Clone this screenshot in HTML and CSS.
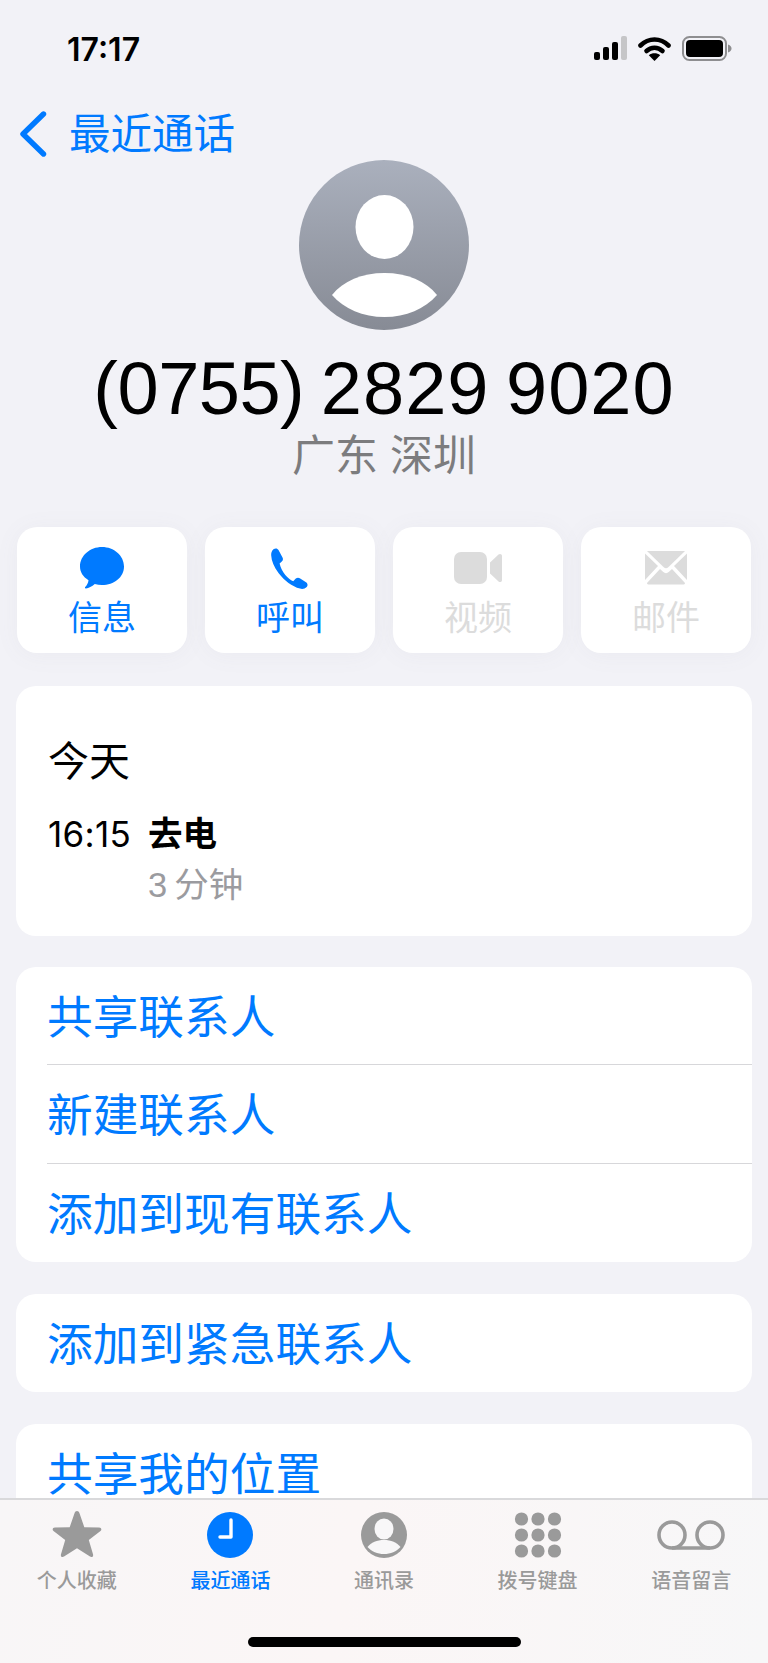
FILE: index.html
```html
<!DOCTYPE html>
<html lang="zh-CN">
<head>
    <meta charset="utf-8">
    <title>最近通话</title>
    <link rel="stylesheet" href="styles.css">
</head>
<body>
    <div class="content">
        <div class="status-bar">
            <span class="time">17:17</span>
            <div class="status-icons">
                <svg width="33" height="24" viewBox="0 0 33 24">
                    <rect x="0" y="16" width="6" height="8" rx="2" fill="#000"/>
                    <rect x="9" y="11" width="6" height="13" rx="2" fill="#000"/>
                    <rect x="18" y="6" width="6" height="18" rx="2" fill="#000"/>
                    <rect x="27" y="0" width="6" height="24" rx="2" fill="#c6c6c8"/>
                </svg>
                <svg width="33" height="25" viewBox="0 0 33 25">
                    <path d="M2.5 9.5C10.5 1.5 22.5 1.5 30.5 9.5" fill="none" stroke="#000" stroke-width="4.6" stroke-linecap="round"/>
                    <path d="M8.5 15C13 10.7 20 10.7 24.5 15" fill="none" stroke="#000" stroke-width="4.6" stroke-linecap="round"/>
                    <path d="M16.5 25L10.8 19.2C14 16.6 19 16.6 22.2 19.2Z" fill="#000"/>
                </svg>
                <svg width="50" height="25" viewBox="0 0 50 25">
                    <rect x="1" y="1" width="43" height="23" rx="6.5" fill="none" stroke="#8e8e90" stroke-width="2"/>
                    <rect x="4" y="4" width="37" height="17" rx="4" fill="#000"/>
                    <path d="M46 8.5C48.5 9.3 49.5 10.8 49.5 12.5S48.5 15.7 46 16.5Z" fill="#8e8e90"/>
                </svg>
            </div>
        </div>

        <div class="nav">
            <svg class="back-icon" width="28" height="46" viewBox="0 0 28 46">
                <path d="M24.5 3L4 23L24.5 43" fill="none" stroke="#007aff" stroke-width="5.4" stroke-linecap="round" stroke-linejoin="round"/>
            </svg>
            <span class="nav-title">最近通话</span>
        </div>

        <div class="header">
            <svg class="avatar" width="170" height="170" viewBox="0 0 170 170">
                <defs>
                    <linearGradient id="avatarBg" x1="0" y1="0" x2="0" y2="1">
                        <stop offset="0" stop-color="#aab0bd"/>
                        <stop offset="1" stop-color="#878b95"/>
                    </linearGradient>
                </defs>
                <circle cx="85" cy="85" r="85" fill="url(#avatarBg)"/>
                <ellipse cx="85.5" cy="67" rx="29" ry="32" fill="#fff"/>
                <path d="M33 135C44 121 63 113 85.5 113S127 121 138 135C126 149 107 157 85.5 157S45 149 33 135Z" fill="#fff"/>
            </svg>
            <h1 class="number"><span class="area-code">(0755)</span> 2829 9020</h1>
            <p class="place">广东 深圳</p>
        </div>

        <div class="actions">
            <div class="action">
                <svg width="46" height="42" viewBox="0 0 46 42">
                    <path d="M23 0C35 0 45 8.600 45 19.500S35 38 23 38C20.500 38 18 37.600 15.800 37C13 39.500 9.500 41 7 41.500C6 41.600 5.600 40.800 6.200 40.100C7.800 38.300 9.300 35.700 9.500 33.200C4 29.800 1 25 1 19.500C1 8.600 11 0 23 0Z" fill="#007aff"/>
                </svg>
                <span>信息</span>
            </div>
            <div class="action">
                <svg width="46" height="42" viewBox="0 0 46 42">
                    <path d="M6.500 2.300C8 1 10.500 1 11.500 3L15.500 10.500C16.300 12 16 13.400 14.800 14.500L12.600 16.500C13.500 20.500 15.500 24.500 18.300 28C20.800 31 23.500 33 26.200 34.200L28.800 31.600C30 30.500 31.500 30.300 32.800 31.200L39 35.300C40.800 36.500 41 38.500 39.700 40C38 41.700 35.500 42.300 33 41.600C25 39.500 17.500 33.800 11.500 26C7 20 4.500 14 4.200 8.500C4 6 4.800 3.800 6.500 2.300Z" fill="#007aff"/>
                </svg>
                <span>呼叫</span>
            </div>
            <div class="action disabled">
                <svg width="48" height="42" viewBox="0 0 48 42">
                    <rect x="0" y="5" width="33" height="32" rx="7" fill="#dcdcdc"/>
                    <path d="M36 15.500L44.500 7.500C46 6.300 48 7 48 9V33C48 35 46 35.700 44.500 34.500L36 26.500Z" fill="#dcdcdc"/>
                </svg>
                <span>视频</span>
            </div>
            <div class="action disabled">
                <svg width="44" height="42" viewBox="0 0 44 42">
                    <path d="M3 4H41L24 20.500C22.800 21.600 21.200 21.600 20 20.500Z" fill="#dcdcdc"/>
                    <path d="M1 6.500L14 19L1 33Z" fill="#dcdcdc"/>
                    <path d="M43 6.500L30 19L43 33Z" fill="#dcdcdc"/>
                    <path d="M3 36L16 22L19 24.800C21 26.600 23 26.600 25 24.800L28 22L41 36C41 37 40 37.500 39 37.500H5C4 37.500 3 37 3 36Z" fill="#dcdcdc"/>
                </svg>
                <span>邮件</span>
            </div>
        </div>

        <div class="card call-card">
            <div class="call-day">今天</div>
            <div class="call-row">
                <span class="call-time">16:15</span>
                <div>
                    <div class="call-type">去电</div>
                    <div class="call-length"><span class="call-minutes">3</span>分钟</div>
                </div>
            </div>
        </div>

        <div class="card">
            <div class="row">共享联系人</div>
            <div class="row">新建联系人</div>
            <div class="row">添加到现有联系人</div>
        </div>

        <div class="card">
            <div class="row">添加到紧急联系人</div>
        </div>

        <div class="card">
            <div class="row">共享我的位置</div>
        </div>
    </div>

    <div class="tabbar">
        <div class="tabs">
            <div class="tab">
                <svg width="54" height="52" viewBox="0 0 52 52">
                    <path d="M26 2C27.200 2 28 2.800 28.500 4.200L33.300 18.200L48 18.500C50.500 18.600 51 20.800 49.500 22L37.800 31L42 45.200C42.700 47.500 40.800 48.800 39 47.600L26 39.300L13 47.600C11.200 48.800 9.300 47.500 10 45.200L14.200 31L2.500 22C1 20.800 1.500 18.600 4 18.500L18.700 18.200L23.500 4.200C24 2.800 24.800 2 26 2Z" fill="#9a9a9a"/>
                </svg>
                <span>个人收藏</span>
            </div>
            <div class="tab active">
                <svg width="52" height="52" viewBox="0 0 52 52">
                    <circle cx="26" cy="26" r="23" fill="#007aff"/>
                    <path d="M27 11V28H16" fill="none" stroke="#fff" stroke-width="3.400" stroke-linecap="round" stroke-linejoin="round"/>
                </svg>
                <span>最近通话</span>
            </div>
            <div class="tab">
                <svg width="52" height="52" viewBox="0 0 52 52">
                    <circle cx="26" cy="26" r="23" fill="#9a9a9a"/>
                    <ellipse cx="26" cy="20" rx="9.500" ry="10.500" fill="#f8f7f8"/>
                    <path d="M9.500 38C13 33.500 19 31 26 31S39 33.500 42.500 38C38.500 42.500 32.500 45 26 45S13.500 42.500 9.500 38Z" fill="#f8f7f8"/>
                </svg>
                <span>通讯录</span>
            </div>
            <div class="tab">
                <svg width="52" height="52" viewBox="0 0 52 52">
                    <g fill="#9a9a9a">
                        <circle cx="9.500" cy="10" r="6.600"/><circle cx="26" cy="10" r="6.600"/><circle cx="42.500" cy="10" r="6.600"/>
                        <circle cx="9.500" cy="26" r="6.600"/><circle cx="26" cy="26" r="6.600"/><circle cx="42.500" cy="26" r="6.600"/>
                        <circle cx="9.500" cy="42" r="6.600"/><circle cx="26" cy="42" r="6.600"/><circle cx="42.500" cy="42" r="6.600"/>
                    </g>
                </svg>
                <span>拨号键盘</span>
            </div>
            <div class="tab">
                <svg width="68" height="52" viewBox="0 0 68 52">
                    <path d="M15 39H53" fill="none" stroke="#9a9a9a" stroke-width="3.600"/>
                    <circle cx="15" cy="26" r="13" fill="none" stroke="#9a9a9a" stroke-width="3.600"/>
                    <circle cx="53" cy="26" r="13" fill="none" stroke="#9a9a9a" stroke-width="3.600"/>
                </svg>
                <span>语音留言</span>
            </div>
        </div>
        <div class="home-indicator"></div>
    </div>
</body>
</html>
```

FILE: styles.css
```css
body {
    margin: 0;
    height: 1663px;
    overflow: hidden;
    display: flex;
    flex-direction: column;
    background: #f2f2f7;
    font-family: "Liberation Sans", "Noto Sans CJK SC", sans-serif;
    color: #000;
}
.content {
    flex: 1;
    min-height: 0;
    overflow: hidden;
    padding: 0 16px;
}
.status-bar {
    height: 96px;
    display: flex;
    align-items: center;
    justify-content: space-between;
    padding: 0 20px 0 51px;
}
.time {
    font-family: Inter, sans-serif;
    font-size: 32px;
    font-weight: 600;
    padding-top: 2px;
}
.status-icons {
    display: flex;
    align-items: center;
    gap: 11px;
}
.nav {
    height: 60px;
    display: flex;
    align-items: center;
    gap: 22px;
    padding-left: 3px;
    margin-top: 8px;
    color: #007aff;
    font-size: 41.5px;
}
.nav-title {
    padding-bottom: 6px;
}
.header {
    text-align: center;
    margin-top: -4px;
}
.avatar {
    display: block;
    margin: 0 auto;
}
.number {
    margin: 17px 0 0;
    font-size: 74px;
    font-weight: 400;
    line-height: 84px;
    letter-spacing: 1px;
    word-spacing: -5px;
}
.area-code {
    letter-spacing: -0.5px;
}
.place {
    margin: 0;
    font-size: 43px;
    line-height: 50px;
    color: #7c7c7e;
}
.actions {
    display: grid;
    grid-template-columns: repeat(4, 1fr);
    gap: 18px;
    margin: 46px 1px 0;
}
.action {
    height: 126px;
    background: #fff;
    border-radius: 20px;
    box-shadow: 0 2px 24px rgba(120, 120, 140, 0.06);
    display: flex;
    flex-direction: column;
    align-items: center;
    padding-top: 20px;
    box-sizing: border-box;
    color: #007aff;
    font-size: 34px;
    line-height: 42px;
}
.action svg {
    margin-bottom: 8px;
}
.disabled {
    color: #dcdcdc;
}
.card {
    background: #fff;
    border-radius: 20px;
    margin-top: 32px;
}
.call-card {
    margin-top: 33px;
    height: 250px;
    box-sizing: border-box;
    padding: 50px 32px 0;
}
.call-card + .card {
    margin-top: 31px;
}
.call-day {
    font-size: 41px;
    line-height: 52px;
}
.call-row {
    display: grid;
    grid-template-columns: 100px 1fr;
    margin-top: 23px;
}
.call-time {
    font-family: Inter, sans-serif;
    font-size: 35px;
    line-height: 46px;
    letter-spacing: 0.3px;
}
.call-type {
    font-size: 34.5px;
    font-weight: 700;
    line-height: 46px;
}
.call-length {
    font-size: 34.5px;
    line-height: 48px;
    color: #9b9b9f;
    margin-top: 4px;
}
.call-minutes {
    padding-right: 7px;
}
.row {
    height: 98.33px;
    padding-top: 5px;
    line-height: 93px;
    margin-left: 31px;
    font-size: 45.7px;
    color: #007aff;
    border-bottom: 1px solid #d7d7da;
    box-sizing: border-box;
}
.row:last-child {
    border-bottom: 0;
}
.tabbar {
    height: 165px;
    box-sizing: border-box;
    background: linear-gradient(100deg, #f8f6f7, #fbf6f6 45%, #f7f7f8);
    border-top: 2px solid #d9d9db;
    display: flex;
    flex-direction: column;
}
.tabs {
    display: grid;
    grid-template-columns: repeat(5, 1fr);
    padding-top: 9px;
}
.tab {
    display: flex;
    flex-direction: column;
    align-items: center;
    color: #9a9a9a;
    font-size: 20px;
    line-height: 28px;
    font-weight: 500;
}
.tab svg {
    margin-bottom: 6px;
}
.active {
    color: #007aff;
}
.home-indicator {
    width: 273px;
    height: 10px;
    border-radius: 5px;
    background: #000;
    margin: 42px auto 0;
}
```
